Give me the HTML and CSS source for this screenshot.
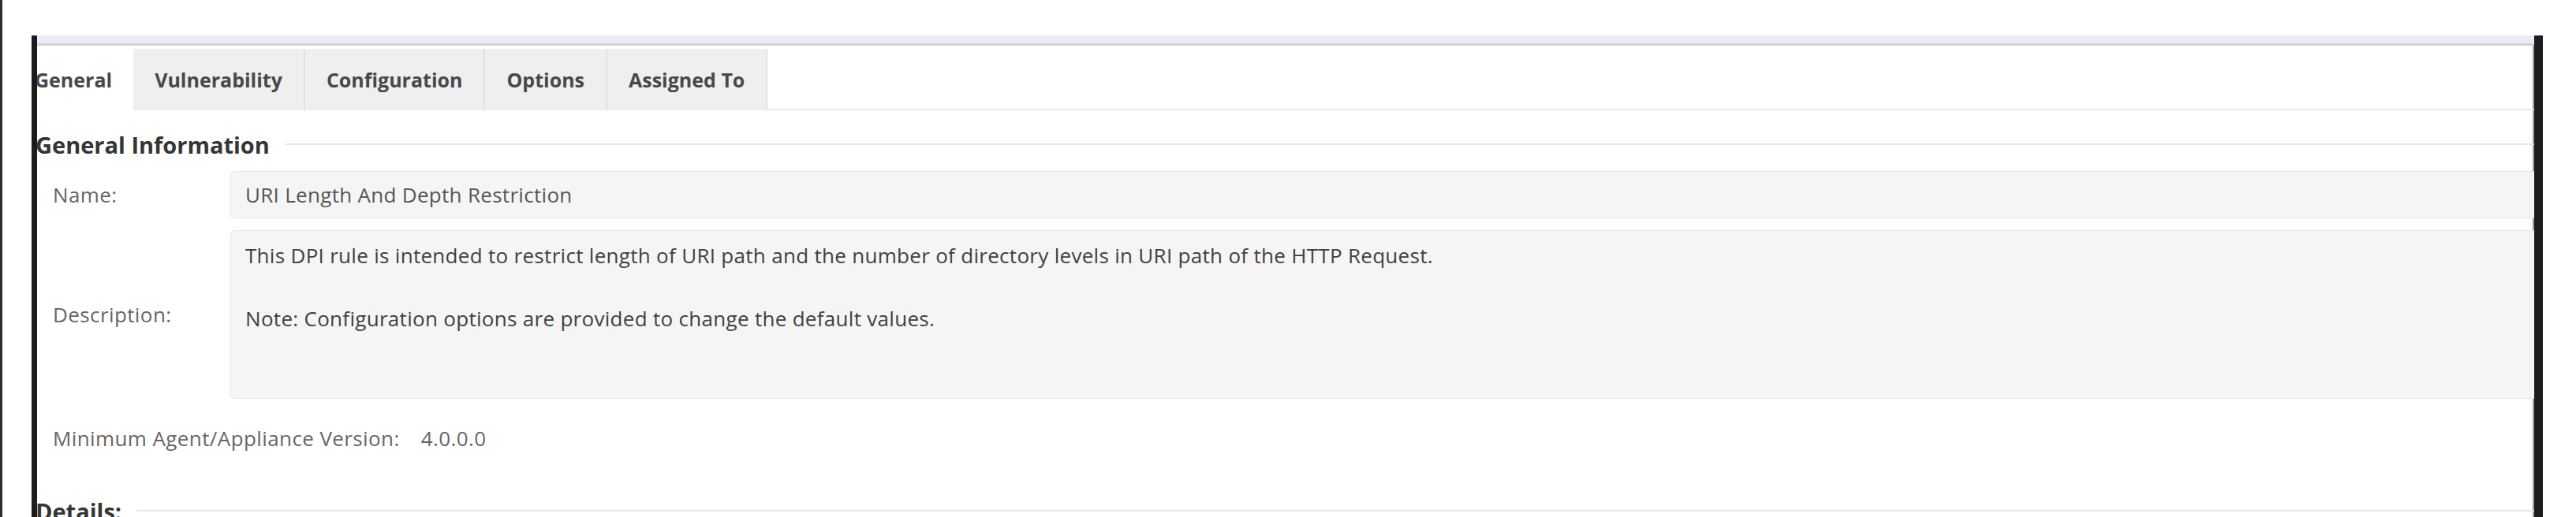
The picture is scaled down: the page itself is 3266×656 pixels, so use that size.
FILE: index.html
```html
<!DOCTYPE html>
<html lang="en">
<head>
<meta charset="utf-8">
<title>General - URI Length And Depth Restriction</title>
<link rel="stylesheet" href="styles.css">
</head>
<body>
<div class="window">
  <div class="topbar"></div>
  <div class="inner">
    <div class="tabs">
      <div class="tab active">General</div>
      <div class="tab">Vulnerability</div>
      <div class="tab">Configuration</div>
      <div class="tab">Options</div>
      <div class="tab">Assigned To</div>
      <div class="tab-fill"></div>
    </div>
    <div class="legend">General Information</div>
    <div class="row">
      <div class="label">Name:</div>
      <div class="field name-field">URI Length And Depth Restriction</div>
    </div>
    <div class="row desc-row">
      <div class="label">Description:</div>
      <div class="field desc-field">
        <p>This DPI rule is intended to restrict length of URI path and the number of directory levels in URI path of the HTTP Request.</p>
        <p>Note: Configuration options are provided to change the default values.</p>
      </div>
    </div>
    <div class="version">
      <span class="version-label">Minimum Agent/Appliance Version:</span>
      <span class="version-value">4.0.0.0</span>
    </div>
    <div class="legend details">Details:</div>
  </div>
</div>
</body>
</html>
```
FILE: styles.css
```css
html, body {
  margin: 0;
  padding: 0;
}
body {
  width: 3266px;
  height: 656px;
  overflow: hidden;
  background: #ffffff;
  border-left: 3px solid #2b2b2b;
  box-sizing: border-box;
  font-family: "Open Sans", "Liberation Sans", Arial, sans-serif;
  color: #555555;
}
.window {
  margin: 45px 42px 0 37px;
  height: 611px;
  border-left: 7px solid #1b1b1b;
  border-right: 11px solid #1e1e1e;
  box-shadow: inset -2px 0 0 #9a9a9a;
  overflow: hidden;
  box-sizing: border-box;
}
.topbar {
  height: 10px;
  background: #e9ecf4;
  border-bottom: 3px solid #cfd3db;
}
.inner {
  margin-left: -32px;
  margin-right: -12px;
  padding-top: 4px;
}
.tabs {
  display: flex;
  height: 78px;
  border-bottom: 2px solid #e8e8e8;
  box-sizing: border-box;
}
.tab {
  display: flex;
  align-items: center;
  padding: 0 27px;
  height: 78px;
  background: #efefef;
  border-right: 2px solid #e2e2e2;
  font-size: 25px;
  font-weight: 700;
  color: #484848;
  box-sizing: border-box;
}
.tab.active {
  background: #ffffff;
  border-right: none;
  padding-left: 29px;
}
.tab-fill {
  flex: 1;
}
.legend {
  display: flex;
  align-items: center;
  margin: 25px 0 0 30px;
  height: 36px;
  font-size: 29px;
  font-weight: 700;
  color: #353535;
}
.legend::after {
  content: "";
  flex: 1;
  height: 2px;
  background: #e6e6e6;
  margin-left: 19px;
}
.row {
  display: flex;
  align-items: center;
  margin-top: 16px;
  padding-left: 52px;
}
.desc-row {
  margin-top: 15px;
}
.label {
  width: 225px;
  flex: none;
  font-size: 26px;
  letter-spacing: 0.4px;
  color: #666666;
}
.field {
  flex: 1;
  background: #f5f5f5;
  border: 1px solid #e7e7e7;
  border-radius: 5px;
  box-sizing: border-box;
  font-size: 26px;
  letter-spacing: 0.3px;
  color: #555555;
  padding-left: 18px;
}
.name-field {
  height: 60px;
  line-height: 58px;
}
.desc-field {
  height: 214px;
  padding-top: 11px;
  color: #404040;
  line-height: 40px;
}
.desc-field p {
  margin: 0 0 40px 0;
}
.version {
  margin-top: 30px;
  padding-left: 52px;
  line-height: 40px;
  font-size: 26px;
  letter-spacing: 0.4px;
  color: #666666;
}
.version-value {
  margin-left: 20px;
}
.details {
  margin-top: 54px;
}
```
